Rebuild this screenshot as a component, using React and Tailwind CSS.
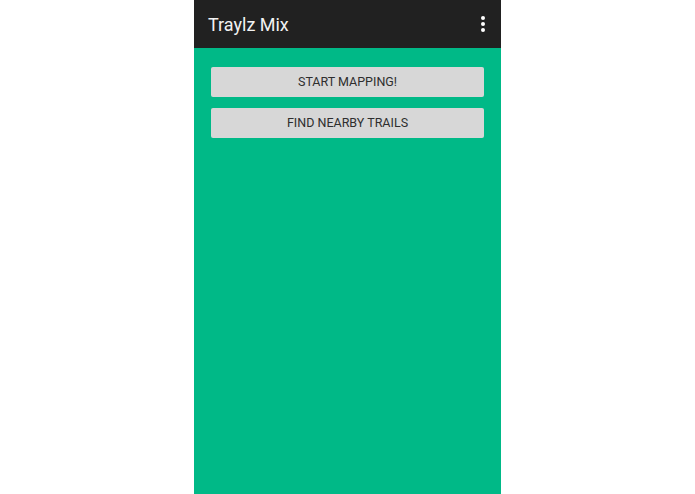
import React from "react";

const ACTIONS = ["START MAPPING!", "FIND NEARBY TRAILS"];

function OverflowDots() {
  return (
    <div className="flex flex-col items-center gap-[2px] px-3 py-1">
      <span className="block w-[4px] h-[4px] rounded-full bg-white" />
      <span className="block w-[4px] h-[4px] rounded-full bg-white" />
      <span className="block w-[4px] h-[4px] rounded-full bg-white" />
    </div>
  );
}

export default function App() {
  return (
    <div className="w-[695px] h-[494px] bg-white flex justify-center" style={{ fontFamily: "Roboto, 'Liberation Sans', sans-serif" }}>
      <div className="w-[307px] h-full flex flex-col bg-[#00b987]">
        {/* action bar */}
        <header className="h-[48px] bg-[#212121] flex items-center justify-between pl-[14px] pr-[4px]">
          <h1 className="text-[18px] text-[#f2f2f2]">Traylz Mix</h1>
          <OverflowDots />
        </header>

        {/* main buttons */}
        <main className="flex flex-col gap-[11px] pt-[19px] px-[17px]">
          {ACTIONS.map((label) => (
            <button
              key={label}
              className="h-[30px] w-full rounded-[2px] bg-[#d7d7d7] text-[#2e2e2e] text-[12.5px] flex items-center justify-center"
            >
              {label}
            </button>
          ))}
        </main>
      </div>
    </div>
  );
}
